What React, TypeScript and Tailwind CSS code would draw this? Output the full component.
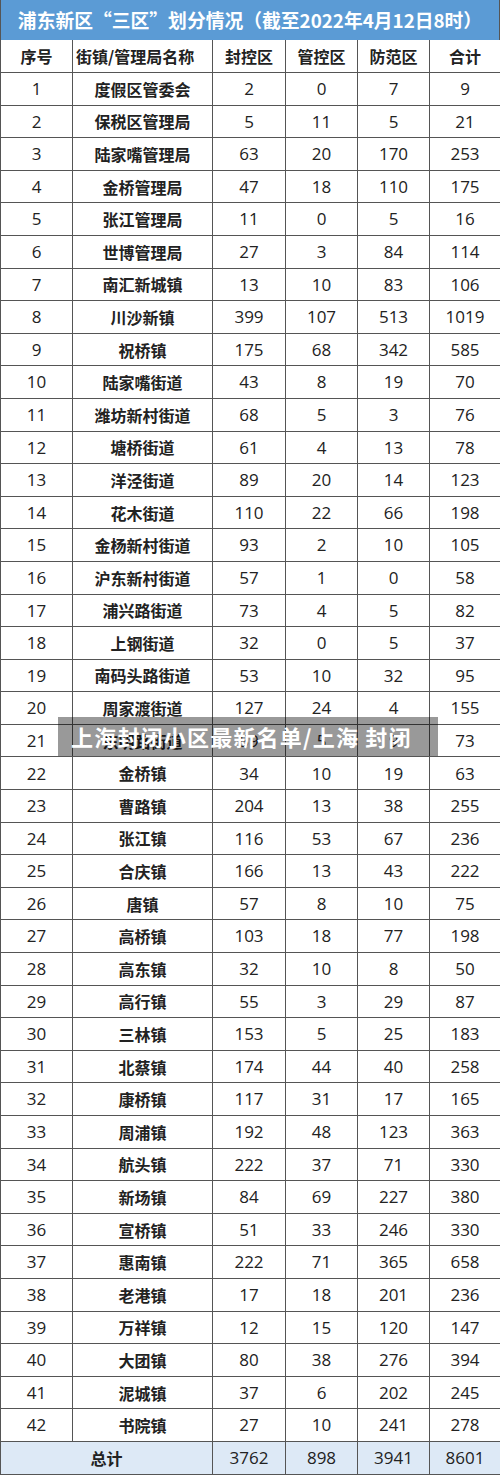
import React from "react";

const rows: [number, string, number, number, number, number][] = [
  [1, "度假区管委会", 2, 0, 7, 9],
  [2, "保税区管理局", 5, 11, 5, 21],
  [3, "陆家嘴管理局", 63, 20, 170, 253],
  [4, "金桥管理局", 47, 18, 110, 175],
  [5, "张江管理局", 11, 0, 5, 16],
  [6, "世博管理局", 27, 3, 84, 114],
  [7, "南汇新城镇", 13, 10, 83, 106],
  [8, "川沙新镇", 399, 107, 513, 1019],
  [9, "祝桥镇", 175, 68, 342, 585],
  [10, "陆家嘴街道", 43, 8, 19, 70],
  [11, "潍坊新村街道", 68, 5, 3, 76],
  [12, "塘桥街道", 61, 4, 13, 78],
  [13, "洋泾街道", 89, 20, 14, 123],
  [14, "花木街道", 110, 22, 66, 198],
  [15, "金杨新村街道", 93, 2, 10, 105],
  [16, "沪东新村街道", 57, 1, 0, 58],
  [17, "浦兴路街道", 73, 4, 5, 82],
  [18, "上钢街道", 32, 0, 5, 37],
  [19, "南码头路街道", 53, 10, 32, 95],
  [20, "周家渡街道", 127, 24, 4, 155],
  [21, "东明路街道", 59, 5, 9, 73],
  [22, "金桥镇", 34, 10, 19, 63],
  [23, "曹路镇", 204, 13, 38, 255],
  [24, "张江镇", 116, 53, 67, 236],
  [25, "合庆镇", 166, 13, 43, 222],
  [26, "唐镇", 57, 8, 10, 75],
  [27, "高桥镇", 103, 18, 77, 198],
  [28, "高东镇", 32, 10, 8, 50],
  [29, "高行镇", 55, 3, 29, 87],
  [30, "三林镇", 153, 5, 25, 183],
  [31, "北蔡镇", 174, 44, 40, 258],
  [32, "康桥镇", 117, 31, 17, 165],
  [33, "周浦镇", 192, 48, 123, 363],
  [34, "航头镇", 222, 37, 71, 330],
  [35, "新场镇", 84, 69, 227, 380],
  [36, "宣桥镇", 51, 33, 246, 330],
  [37, "惠南镇", 222, 71, 365, 658],
  [38, "老港镇", 17, 18, 201, 236],
  [39, "万祥镇", 12, 15, 120, 147],
  [40, "大团镇", 80, 38, 276, 394],
  [41, "泥城镇", 37, 6, 202, 245],
  [42, "书院镇", 27, 10, 241, 278],
];

const cjk = "font-['Microsoft_YaHei','Noto_Sans_CJK_SC',sans-serif]";
const num = "font-['Open_Sans','Noto_Sans_CJK_SC',sans-serif]";

export default function App() {
  return (
    <div className={`relative w-[500px] bg-white text-[#222] ${cjk}`}>
      <div className="h-[40px] bg-[#5b9bd5] flex items-center justify-center border-x border-[#555] text-white font-bold text-[18.8px] whitespace-nowrap">
        浦东新区“三区”划分情况（截至2022年4月12日8时）
      </div>

      <div className="grid grid-cols-[72px_140px_73px_72px_72px_71px] border-l border-[#555]">
        {["序号", "街镇/管理局名称", "封控区", "管控区", "防范区", "合计"].map((h, i) => (
          <div
            key={h}
            className={`h-[33px] flex items-center border-r border-b border-[#555] font-bold text-[16px] ${
              i === 1 ? "justify-start pl-[3px]" : "justify-center"
            }`}
          >
            {h}
          </div>
        ))}

        {rows.map((r) => (
          <React.Fragment key={r[0]}>
            <div className={`h-[32.6px] flex items-center justify-center border-r border-b border-[#555] text-[17px] ${num}`}>{r[0]}</div>
            <div className="h-[32.6px] flex items-center justify-center border-r border-b border-[#555] text-[16px] font-bold">{r[1]}</div>
            {r.slice(2).map((v, i) => (
              <div key={i} className={`h-[32.6px] flex items-center justify-center border-r border-b border-[#555] text-[17px] ${num}`}>
                {v}
              </div>
            ))}
          </React.Fragment>
        ))}

        <div className="col-span-2 h-[33px] flex items-center justify-center bg-[#dde9f6] border-r border-b border-[#555] font-bold text-[16px]">
          总计
        </div>
        {[3762, 898, 3941, 8601].map((v) => (
          <div key={v} className={`h-[33px] flex items-center justify-center bg-[#dde9f6] border-r border-b border-[#555] text-[17px] ${num}`}>
            {v}
          </div>
        ))}
      </div>

      {/* watermark caption over the table */}
      <div className="absolute left-[58px] top-[717px] w-[380px] h-[39px] bg-black/40 flex items-center pl-[13px] text-white font-bold text-[22px] tracking-[1.2px] whitespace-nowrap">
        上海封闭小区最新名单/上海 封闭
      </div>
    </div>
  );
}
